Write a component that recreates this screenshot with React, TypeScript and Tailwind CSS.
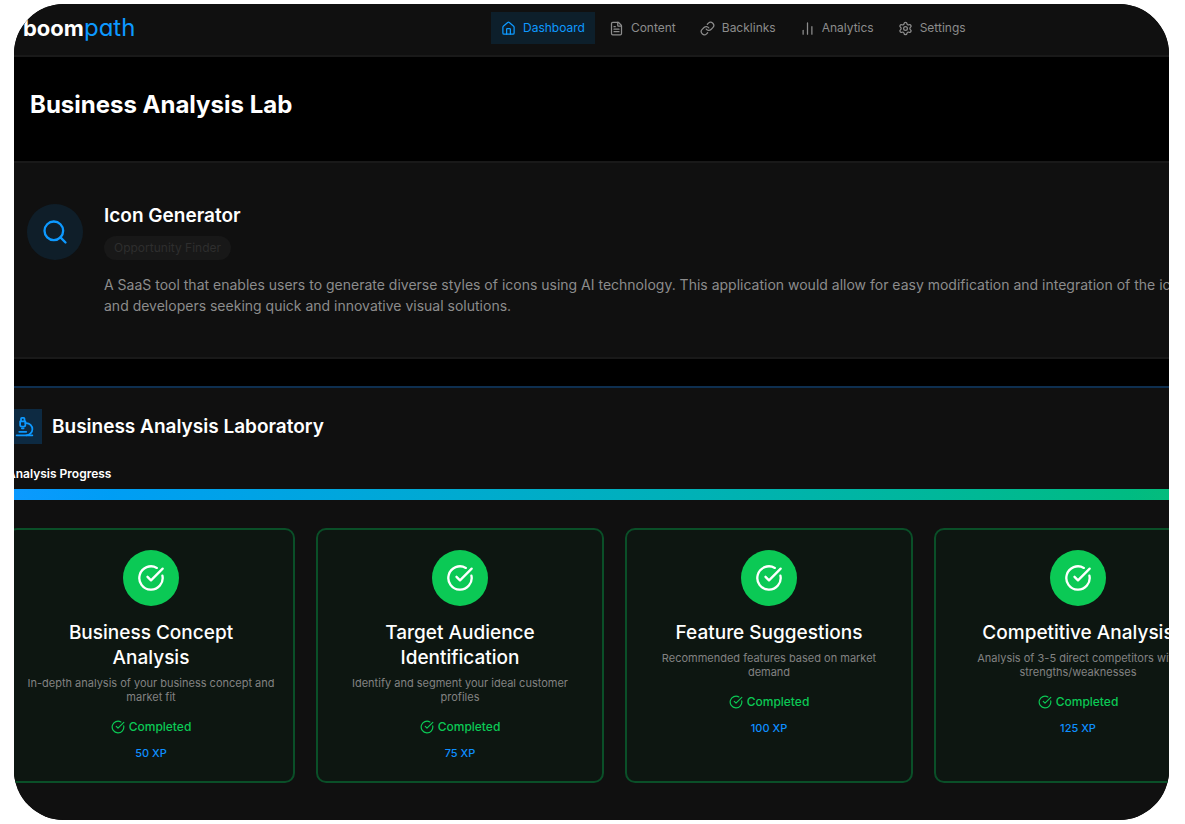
import {
  ChartNoAxesColumn,
  CircleCheckBig,
  FileText,
  House,
  Link,
  Microscope,
  Search,
  Settings,
} from "lucide-react";

const navItems = [
  { label: "Dashboard", icon: House, active: true },
  { label: "Content", icon: FileText, active: false },
  { label: "Backlinks", icon: Link, active: false },
  { label: "Analytics", icon: ChartNoAxesColumn, active: false },
  { label: "Settings", icon: Settings, active: false },
];

const steps = [
  {
    title: "Business Concept Analysis",
    description: "In-depth analysis of your business concept and market fit",
    xp: 50,
  },
  {
    title: "Target Audience Identification",
    description: "Identify and segment your ideal customer profiles",
    xp: 75,
  },
  {
    title: "Feature Suggestions",
    description: "Recommended features based on market demand",
    xp: 100,
  },
  {
    title: "Competitive Analysis",
    description: "Analysis of 3-5 direct competitors with strengths/weaknesses",
    xp: 125,
  },
];

const Header = () => {
  return (
    <header className="flex h-[53px] items-start border-b-2 border-[#191919] bg-[#101010] pt-2 pl-[37px]">
      <a
        href="#"
        className="w-[113px] text-[22px] leading-8 font-bold text-white [font-feature-settings:'cv11']"
      >
        boom<span className="text-2xl leading-8 font-normal text-[#0d99ff]">path</span>
      </a>
      <nav className="ml-[355px] flex gap-1">
        {navItems.map(({ label, icon: Icon, active }) => (
          <a
            key={label}
            href="#"
            className={
              active
                ? "flex items-center gap-[7px] bg-[#0d1f2b] px-2.5 py-1.5 text-xs leading-5 text-[#0d99ff]"
                : "flex items-center gap-[7px] px-2.5 py-1.5 text-xs leading-5 text-[#8c8c8c]"
            }
          >
            <Icon size={15} />
            {label}
          </a>
        ))}
      </nav>
    </header>
  );
};

const ProjectSummary = () => {
  return (
    <section className="flex items-start gap-[21px] border-y-2 border-[#191919] bg-[#101010] py-[41px] pl-[41px]">
      <div className="flex size-14 shrink-0 items-center justify-center rounded-full bg-[#0f1e29] text-[#0d99ff]">
        <Search size={28} />
      </div>
      <div>
        <h2 className="text-[19px] leading-6 font-semibold text-white">Icon Generator</h2>
        <span className="mt-2 inline-block rounded-full bg-[#181818] px-2.5 text-xs leading-6 text-[#2e2e2e]">
          Opportunity Finder
        </span>
        <p className="mt-3.5 text-sm leading-[21px] whitespace-nowrap text-[#8c8c8c]">
          A SaaS tool that enables users to generate diverse styles of icons using AI technology. This
          application would allow for easy modification and integration of the icons
          <br />
          and developers seeking quick and innovative visual solutions.
        </p>
      </div>
    </section>
  );
};

const StepCard = ({ title, description, xp }: { title: string; description: string; xp: number }) => {
  return (
    <article className="flex flex-col items-center rounded-[10px] border-2 border-[#0a4f28] bg-[#0d1611] px-4 py-5 text-center">
      <div className="flex size-14 items-center justify-center rounded-full bg-[#0bc955] text-white">
        <CircleCheckBig size={28} />
      </div>
      <h3 className="mt-3.5 px-6 text-[19px] leading-[25px] font-medium text-white">{title}</h3>
      <p className="mt-1.5 text-[11px] leading-[14px] text-[#828282]">{description}</p>
      <p className="mt-3.5 flex items-center gap-1 text-xs leading-[18px] font-medium text-[#0bc955]">
        <CircleCheckBig size={14} />
        Completed
      </p>
      <p className="mt-[9px] text-[11px] leading-4 font-medium text-[#0d8fff]">{xp} XP</p>
    </article>
  );
};

const Laboratory = () => {
  return (
    <section className="mt-[27px] border-t-2 border-[#0e2f50] bg-[#101010] px-[21px] pt-[21px] pb-[37px]">
      <div className="flex items-center gap-2.5">
        <div className="flex size-[35px] items-center justify-center bg-[#0d2a42] text-[#0d99ff]">
          <Microscope size={21} />
        </div>
        <h2 className="text-[19px] leading-6 font-semibold text-white">Business Analysis Laboratory</h2>
      </div>
      <p className="mt-[21px] text-xs leading-[18px] font-semibold text-white">Analysis Progress</p>
      <div className="mt-1.5 h-[11px] rounded-full bg-gradient-to-r from-[#0d99ff] to-[#0bbd75]" />
      <div className="mt-7 grid grid-cols-4 gap-[21px]">
        {steps.map((step) => (
          <StepCard key={step.title} {...step} />
        ))}
      </div>
    </section>
  );
};

const App = () => {
  return (
    <div className="bg-white py-1 pr-4 pl-3.5 font-['Inter',sans-serif]">
      <div className="overflow-hidden rounded-[50px] bg-black">
        {/* the page runs past both sides of the rounded frame */}
        <div className="-mr-[74px] -ml-7">
          <Header />
          <h1 className="pt-7 pb-9 pl-11 text-2xl leading-10 font-bold text-white">
            Business Analysis Lab
          </h1>
          <ProjectSummary />
          <Laboratory />
        </div>
      </div>
    </div>
  );
};

export default App;
